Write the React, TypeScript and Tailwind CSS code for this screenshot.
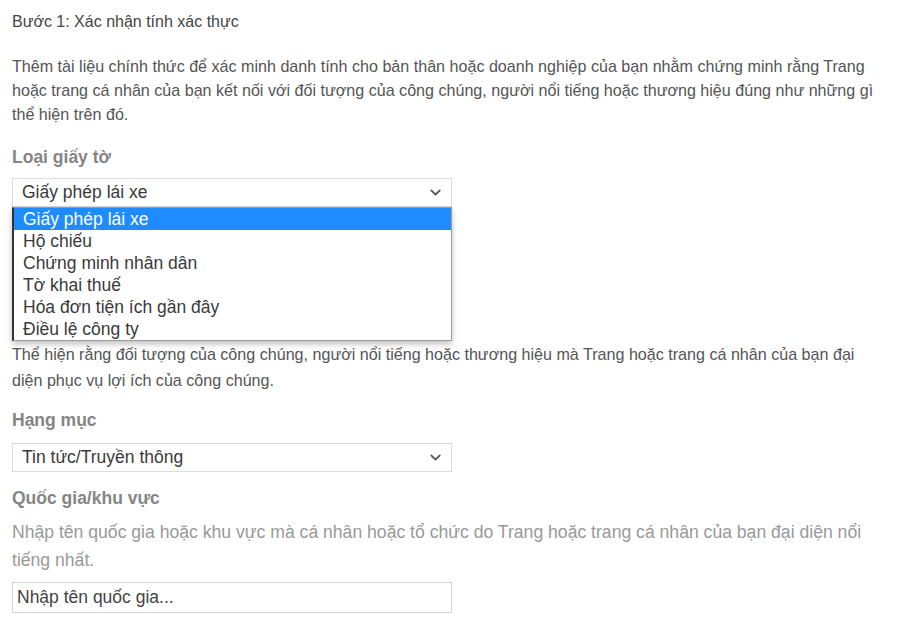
import { ChevronDown } from "lucide-react";

const options = [
  "Giấy phép lái xe",
  "Hộ chiếu",
  "Chứng minh nhân dân",
  "Tờ khai thuế",
  "Hóa đơn tiện ích gần đây",
  "Điều lệ công ty",
];

const SelectBox = ({ value }: { value: string }) => (
  <div className="flex h-[29px] w-[440px] items-center justify-between border border-[#dcdcdc] bg-white pl-[9px] pr-[7px] text-[17.5px] text-[#3a3a3a]">
    <span>{value}</span>
    <ChevronDown size={17} strokeWidth={2.6} className="text-[#555]" />
  </div>
);

export default function App() {
  return (
    <div className="min-h-[625px] bg-white px-[12px] pt-[12px] font-['Liberation_Sans',Arial,sans-serif]">
      {/* Tiêu đề bước */}
      <p className="text-[16px] leading-[20px] text-[#444]">Bước 1: Xác nhận tính xác thực</p>

      <p className="mt-[22px] whitespace-nowrap text-[16.1px] leading-[24px] text-[#555]">
        Thêm tài liệu chính thức để xác minh danh tính cho bản thân hoặc doanh nghiệp của bạn nhằm chứng minh rằng Trang
        <br />
        hoặc trang cá nhân của bạn kết nối với đối tượng của công chúng, người nổi tiếng hoặc thương hiệu đúng như những gì
        <br />
        thể hiện trên đó.
      </p>

      {/* Loại giấy tờ */}
      <h3 className="mt-[19px] text-[17.5px] font-bold leading-[24px] text-[#858585]">Loại giấy tờ</h3>
      <div className="relative mt-[9px]">
        <SelectBox value="Giấy phép lái xe" />
        <ul className="absolute left-0 top-[29px] z-10 w-[440px] border border-l-2 border-[#9a9a9a] border-l-[#333] bg-white text-[17.5px] leading-[22px] text-[#3a3a3a] shadow-[0_3px_6px_rgba(0,0,0,0.25)]">
          {options.map((o, i) => (
            <li key={o} className={i === 0 ? "bg-[#1e8cff] pl-[9px] text-white" : "pl-[9px]"}>
              {o}
            </li>
          ))}
        </ul>
      </div>
      <div className="h-[134px]" />

      <p className="whitespace-nowrap text-[16.1px] leading-[26px] text-[#555]">
        Thể hiện rằng đối tượng của công chúng, người nổi tiếng hoặc thương hiệu mà Trang hoặc trang cá nhân của bạn đại
        <br />
        diện phục vụ lợi ích của công chúng.
      </p>

      {/* Hạng mục */}
      <h3 className="mt-[15px] text-[17.5px] font-bold leading-[24px] text-[#858585]">Hạng mục</h3>
      <div className="mt-[11px]">
        <SelectBox value="Tin tức/Truyền thông" />
      </div>

      {/* Quốc gia/khu vực */}
      <h3 className="mt-[14px] text-[17.5px] font-bold leading-[24px] text-[#858585]">Quốc gia/khu vực</h3>
      <p className="mt-[8px] whitespace-nowrap text-[17.6px] leading-[28px] text-[#999]">
        Nhập tên quốc gia hoặc khu vực mà cá nhân hoặc tổ chức do Trang hoặc trang cá nhân của bạn đại diện nổi
        <br />
        tiếng nhất.
      </p>
      <div className="mt-[8px] flex h-[31px] w-[440px] items-center border border-[#d4d4d4] pl-[4px] text-[17.5px] text-[#444]">
        Nhập tên quốc gia...
      </div>
    </div>
  );
}
